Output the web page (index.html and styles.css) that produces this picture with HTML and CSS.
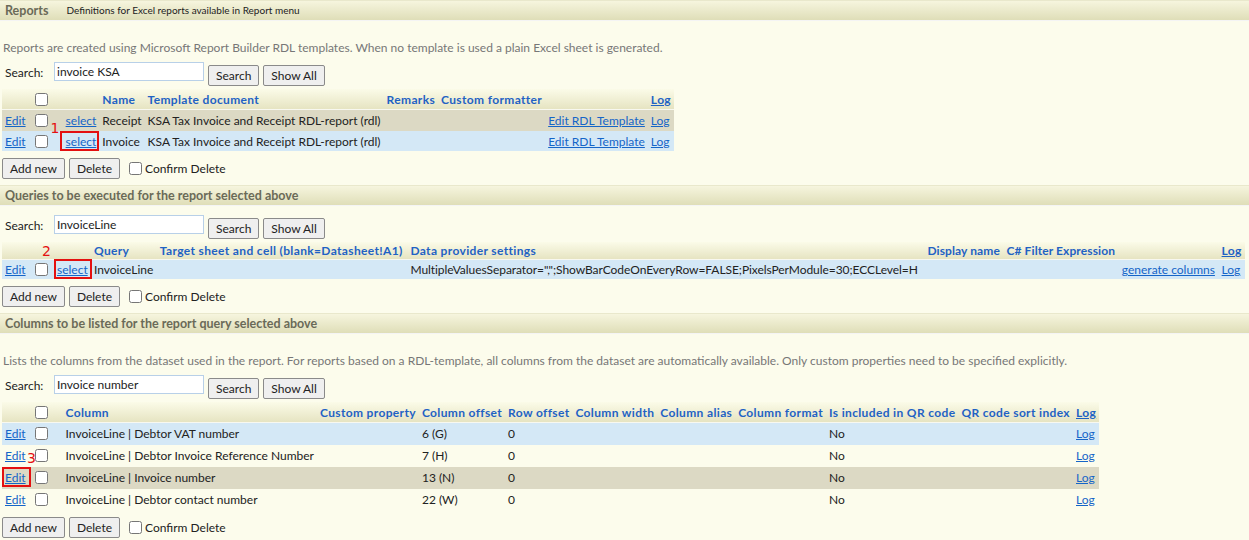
FILE: index.html
```html
<!DOCTYPE html>
<html>
<head>
<meta charset="utf-8">
<link rel="stylesheet" href="styles.css">
</head>
<body>
<div class="section">
  <div class="section-head"><span class="title">Reports</span><span class="sub">Definitions for Excel reports available in Report menu</span></div>
  <div class="desc">Reports are created using Microsoft Report Builder RDL templates. When no template is used a plain Excel sheet is generated.</div>
  <div class="search"><span class="lbl">Search:</span><input class="sinput" type="text" value="invoice KSA"><button class="btn">Search</button><button class="btn">Show All</button></div>
  <table class="grid">
    <tr class="hdr"><th class="c-edit"></th><th class="c-chk"><input type="checkbox"></th><th class="c-sel1"></th><th>Name</th><th>Template document</th><th>Remarks</th><th>Custom formatter</th><th></th><th><a href="#">Log</a></th></tr>
    <tr class="r-beige"><td class="c-edit"><a href="#">Edit</a></td><td class="c-chk"><input type="checkbox"></td><td class="c-sel1"><a href="#">select</a></td><td>Receipt</td><td>KSA Tax Invoice and Receipt RDL-report (rdl)</td><td></td><td></td><td><a href="#">Edit RDL Template</a></td><td><a href="#">Log</a></td></tr>
    <tr class="r-blue"><td class="c-edit"><a href="#">Edit</a></td><td class="c-chk"><input type="checkbox"></td><td class="c-sel1"><a href="#" class="mark m1">select</a></td><td>Invoice</td><td>KSA Tax Invoice and Receipt RDL-report (rdl)</td><td></td><td></td><td><a href="#">Edit RDL Template</a></td><td><a href="#">Log</a></td></tr>
  </table>
  <div class="actions"><button class="btn">Add new</button><button class="btn">Delete</button><label class="confirm"><input type="checkbox">Confirm Delete</label></div>
</div>

<div class="section">
  <div class="section-head"><span class="title">Queries to be executed for the report selected above</span></div>
  <div class="search s2"><span class="lbl">Search:</span><input class="sinput" type="text" value="InvoiceLine"><button class="btn">Search</button><button class="btn">Show All</button></div>
  <table class="grid wide">
    <tr class="hdr short"><th class="c-edit"></th><th class="c-chk"></th><th class="c-sel2"></th><th>Query</th><th>Target sheet and cell (blank=Datasheet!A1)</th><th class="grow">Data provider settings</th><th class="tight">Display name</th><th class="tight">C# Filter Expression</th><th></th><th><a href="#">Log</a></th></tr>
    <tr class="r-blue"><td class="c-edit"><a href="#">Edit</a></td><td class="c-chk"><input type="checkbox"></td><td class="c-sel2"><a href="#" class="mark m2">select</a></td><td>InvoiceLine</td><td></td><td class="grow settings">MultipleValuesSeparator=",";ShowBarCodeOnEveryRow=FALSE;PixelsPerModule=30;ECCLevel=H</td><td></td><td></td><td><a href="#">generate columns</a></td><td><a href="#">Log</a></td></tr>
  </table>
  <div class="actions"><button class="btn">Add new</button><button class="btn">Delete</button><label class="confirm"><input type="checkbox">Confirm Delete</label></div>
</div>

<div class="section">
  <div class="section-head"><span class="title">Columns to be listed for the report query selected above</span></div>
  <div class="desc">Lists the columns from the dataset used in the report. For reports based on a RDL-template, all columns from the dataset are automatically available. Only custom properties need to be specified explicitly.</div>
  <div class="search"><span class="lbl">Search:</span><input class="sinput" type="text" value="Invoice number"><button class="btn">Search</button><button class="btn">Show All</button></div>
  <table class="grid tall">
    <tr class="hdr"><th class="c-edit"></th><th class="c-chk"><input type="checkbox"></th><th class="c-col">Column</th><th>Custom property</th><th>Column offset</th><th>Row offset</th><th>Column width</th><th>Column alias</th><th>Column format</th><th>Is included in QR code</th><th>QR code sort index</th><th><a href="#">Log</a></th></tr>
    <tr class="r-blue"><td class="c-edit"><a href="#">Edit</a></td><td class="c-chk"><input type="checkbox"></td><td class="c-col">InvoiceLine | Debtor VAT number</td><td></td><td>6 (G)</td><td>0</td><td></td><td></td><td></td><td>No</td><td></td><td><a href="#">Log</a></td></tr>
    <tr class="r-cream"><td class="c-edit"><a href="#">Edit</a></td><td class="c-chk"><input type="checkbox"></td><td class="c-col">InvoiceLine | Debtor Invoice Reference Number</td><td></td><td>7 (H)</td><td>0</td><td></td><td></td><td></td><td>No</td><td></td><td><a href="#">Log</a></td></tr>
    <tr class="r-beige"><td class="c-edit"><a href="#" class="mark m3">Edit</a></td><td class="c-chk"><input type="checkbox"></td><td class="c-col">InvoiceLine | Invoice number</td><td></td><td>13 (N)</td><td>0</td><td></td><td></td><td></td><td>No</td><td></td><td><a href="#">Log</a></td></tr>
    <tr class="r-cream"><td class="c-edit"><a href="#">Edit</a></td><td class="c-chk"><input type="checkbox"></td><td class="c-col">InvoiceLine | Debtor contact number</td><td></td><td>22 (W)</td><td>0</td><td></td><td></td><td></td><td>No</td><td></td><td><a href="#">Log</a></td></tr>
  </table>
  <div class="actions"><button class="btn">Add new</button><button class="btn">Delete</button><label class="confirm"><input type="checkbox">Confirm Delete</label></div>
</div>
</body>
</html>
```

FILE: styles.css
```css
html, body {
  margin: 0;
  padding: 0;
  background: #fcfcec;
  font-family: Lato, "Liberation Sans", sans-serif;
  font-size: 12px;
  color: #222;
}
a { color: #1565c8; }
.section-head {
  height: 19px;
  line-height: 19px;
  background: linear-gradient(#f6f5de, #dfdeb8);
  border-top: 1px solid #e9e8cc;
  border-bottom: 1px solid #f4f4f4;
  padding-left: 5px;
  display: flex;
  align-items: center;
  white-space: nowrap;
}
.title {
  font-weight: bold;
  font-size: 12.5px;
  color: #6a6a58;
}
.sub {
  font-size: 10px;
  color: #222;
  margin-left: 18px;
}
.desc {
  color: #777;
  margin: 19px 0 0 3px;
  line-height: 16px;
}
.search {
  display: flex;
  align-items: flex-start;
  margin: 6px 0 0 5px;
  height: 24px;
}
.search.s2 { margin-top: 9px; }
.lbl { margin-top: 3px; width: 49px; }
.sinput {
  width: 144px;
  height: 15px;
  border: 1px solid #b8d0e8;
  background: #fff;
  padding: 1px 2px;
  margin: 0 4px 0 0;
  font: inherit;
  font-size: 12px;
  color: #222;
  outline: none;
}
.btn {
  font: inherit;
  font-size: 12px;
  color: #222;
  background: #efefef;
  border: 1px solid #8a8a8a;
  border-radius: 2px;
  height: 21px;
  padding: 0 7px;
  margin: 3px 4px 0 0;
}
.grid {
  border-collapse: collapse;
  margin: 3px 0 0 2px;
  white-space: nowrap;
}
.grid.wide { width: 1243px; }
.grid th, .grid td {
  padding: 0 3px;
  height: 20px;
  text-align: left;
}
.grid.tall td { height: 21px; }
.grid.wide td { height: 19px; }
.grid .short th { height: 17px; }
.grid td { border-top: 1px solid transparent; }
.grid th {
  color: #1f62c4;
  font-weight: bold;
  letter-spacing: 0.35px;
  background: linear-gradient(#fbfbe8, #e6e4c2);
  border-bottom: 1px solid #f8f8f0;
}
.grid th.tight { letter-spacing: 0.1px; }
.grid td.settings { letter-spacing: -0.06px; }
.grid th a { color: #1f62c4; }
.grid input[type=checkbox] {
  width: 13px;
  height: 13px;
  margin: 3px 3px 3px 3px;
  vertical-align: middle;
}
.c-sel1 { padding-left: 12px !important; }
.c-col { padding-left: 12px !important; }
.r-beige td { background: #dcd9c4; }
.r-blue td { background: #d4e8f6; }
.r-cream td { background: transparent; }
.actions {
  display: flex;
  align-items: center;
  margin: 6px 0 6px 2px;
  height: 22px;
}
.actions .btn { margin-top: 0; }
.confirm {
  display: flex;
  align-items: center;
}
.confirm input { margin: 0 3px 0 5px; width: 13px; height: 13px; }
.mark {
  position: relative;
}
.mark::after {
  content: "";
  position: absolute;
  top: -3px;
  bottom: -2px;
  border: 2px solid #e41010;
}
.m1::after { left: -6px; right: -3px; }
.m2::after { left: -3px; right: -4px; }
.m3::after { left: -3px; right: -5px; }
.mark::before {
  position: absolute;
  color: #e41010;
  font-size: 14px;
  font-family: "DejaVu Sans", sans-serif;
}
.m1::before { content: "1"; left: -15px; top: -14px; }
.m2::before { content: "2"; left: -15px; top: -19px; }
.m3::before { content: "3"; left: 22px; top: -20px; }
```
